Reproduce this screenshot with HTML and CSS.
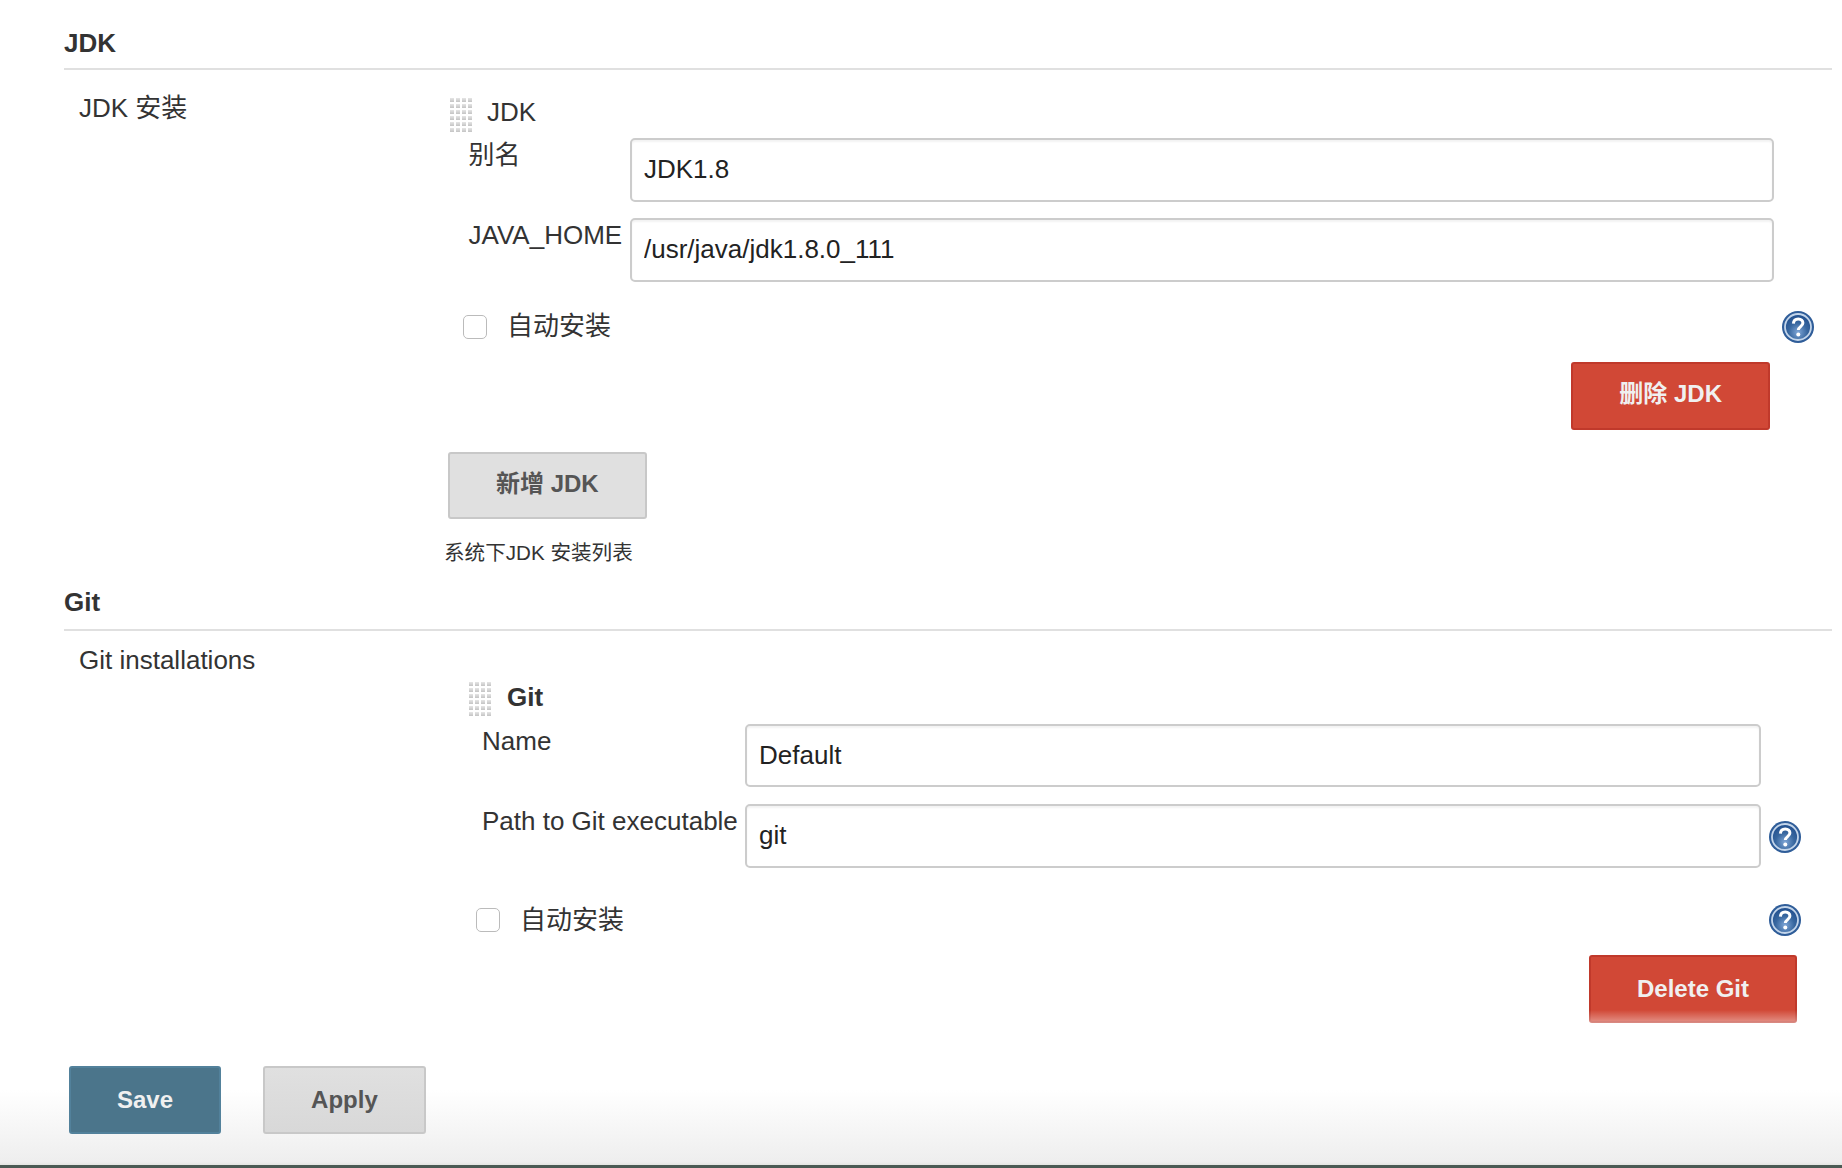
FILE: index.html
```html
<!DOCTYPE html>
<html lang="zh">
<head>
    <meta charset="utf-8">
    <title>Configure</title>
    <link rel="stylesheet" href="styles.css">
</head>
<body>
    <svg class="defs" width="0" height="0">
        <defs>
            <radialGradient id="helpFill" cx="50%" cy="70%" r="65%">
                <stop offset="0" stop-color="#7fa6d6"/>
                <stop offset="0.55" stop-color="#38679f"/>
                <stop offset="1" stop-color="#22508f"/>
            </radialGradient>
            <symbol id="help" viewBox="0 0 32 32">
                <circle cx="16" cy="16" r="16" fill="#2f5d99"/>
                <circle cx="16" cy="16" r="13" fill="url(#helpFill)" stroke="#c3d5ea" stroke-width="1.800"/>
                <path d="M11.400 12.600c.2-3 2.200-4.600 4.900-4.600 2.800 0 4.600 1.700 4.600 4 0 3.400-4.500 3.700-4.600 7" fill="none" stroke="#fff" stroke-width="3"/>
                <circle cx="16.300" cy="23.400" r="2" fill="#fff"/>
            </symbol>
        </defs>
    </svg>

    <div class="page">
        <h2 class="section-title">JDK</h2>
        <div class="section-body">
            <div class="section-label">JDK 安装</div>
            <div class="section-content">
                <div class="item-head">
                    <span class="handle"></span>
                    <span class="item-name">JDK</span>
                </div>
                <div class="field-row">
                    <label class="field-label" for="jdkName">别名</label>
                    <input class="text-input" type="text" id="jdkName" value="JDK1.8">
                </div>
                <div class="field-row field-row-next">
                    <label class="field-label" for="javaHome">JAVA_HOME</label>
                    <input class="text-input" type="text" id="javaHome" value="/usr/java/jdk1.8.0_111">
                </div>
                <div class="check-row">
                    <input class="check" type="checkbox" id="jdkAuto">
                    <label class="check-label" for="jdkAuto">自动安装</label>
                    <svg class="help-icon"><use href="#help"/></svg>
                </div>
                <div class="delete-row">
                    <button class="btn btn-danger btn-cjk" type="button">删除 JDK</button>
                </div>
                <button class="btn btn-plain btn-add btn-cjk" type="button">新增 JDK</button>
                <div class="section-note">系统下JDK 安装列表</div>
            </div>
        </div>

        <h2 class="section-title section-title-git">Git</h2>
        <div class="section-body">
            <div class="section-label section-label-git">Git installations</div>
            <div class="section-content section-content-git">
                <div class="item-head item-head-git">
                    <span class="handle"></span>
                    <b class="item-name">Git</b>
                </div>
                <div class="field-row field-row-git">
                    <label class="field-label" for="gitName">Name</label>
                    <input class="text-input" type="text" id="gitName" value="Default">
                    <span class="help-slot"></span>
                </div>
                <div class="field-row field-row-git field-row-next">
                    <label class="field-label" for="gitPath">Path to Git executable</label>
                    <input class="text-input" type="text" id="gitPath" value="git">
                    <svg class="help-icon help-icon-field"><use href="#help"/></svg>
                </div>
                <div class="check-row check-row-git">
                    <input class="check" type="checkbox" id="gitAuto">
                    <label for="gitAuto">自动安装</label>
                    <svg class="help-icon"><use href="#help"/></svg>
                </div>
                <div class="delete-row delete-row-git">
                    <button class="btn btn-danger" type="button">Delete Git</button>
                </div>
            </div>
        </div>
    </div>

    <div class="bottom-bar">
        <button class="btn btn-save" type="button">Save</button>
        <button class="btn btn-plain btn-apply" type="button">Apply</button>
    </div>
</body>
</html>
```

FILE: styles.css
```css
body {
    position: relative;
    height: 1168px;
    margin: 0;
    overflow: hidden;
    background-color: #fff;
    color: #333;
    font-family: "Liberation Sans", "Noto Sans CJK SC", sans-serif;
    font-size: 26px;
    line-height: 30px;
}
.defs {
    position: absolute;
}
.page {
    padding: 4px 10px 0 64px;
}
.section-title {
    margin: 0;
    padding: 24px 0 10px;
    border-bottom: 2px solid #e0e0e0;
    font-size: 26px;
    line-height: 30px;
}
.section-title-git {
    padding: 22px 0 12px;
}
.section-body {
    display: flex;
}
.section-label {
    flex: none;
    width: 369px;
    padding: 23px 0 0 15px;
}
.section-label-git {
    padding-top: 14px;
}
.section-content {
    flex: 1;
    padding-top: 28px;
}
.section-content-git {
    padding-top: 51px;
}

.item-head {
    display: flex;
    align-items: flex-start;
    gap: 15px;
    height: 34px;
    padding-left: 2px;
}
.item-head .item-name {
    margin-top: -1px;
}
.item-head-git {
    gap: 16px;
    padding-left: 21px;
}
.item-head-git .item-name {
    margin-top: 0;
}
.handle {
    flex: none;
    width: 22px;
    height: 34px;
    background-image:
        repeating-linear-gradient(90deg, transparent 0 4px, #fff 4px 6px),
        repeating-linear-gradient(180deg, transparent 0 4px, #fff 4px 6px),
        linear-gradient(#e6e6e6, #b2b2b2);
    background-size: auto, auto, 100% 6px;
}

.field-row {
    display: flex;
    align-items: flex-start;
    margin-top: 6px;
    padding: 0 58px 0 20.5px;
}
.field-row-next {
    margin-top: 16px;
}
.field-row-git {
    margin-top: 8px;
    padding: 0 31px 0 34px;
}
.field-row-git.field-row-next {
    margin-top: 17px;
}
.field-label {
    flex: none;
    width: 161.5px;
    padding-top: 2px;
}
.field-row-git .field-label {
    width: 263px;
}
.text-input {
    flex: 1;
    box-sizing: border-box;
    min-width: 0;
    height: 63.5px;
    padding: 0 12px;
    border: 2px solid #ccc;
    border-radius: 5px;
    box-shadow: inset 0 2px 2px rgba(0,0,0,0.05);
    background-color: #fff;
    color: #222;
    font-family: inherit;
    font-size: 26px;
}
.field-row-next .text-input {
    height: 64.5px;
}
.field-row-git.field-row-next .text-input {
    height: 63.5px;
}
.help-slot {
    flex: none;
    width: 32px;
    margin-left: 8px;
}
.help-icon {
    flex: none;
    width: 32px;
    height: 32px;
    margin-left: auto;
}
.help-icon-field {
    margin-top: 17px;
    margin-left: 8px;
}

.check-row {
    display: flex;
    align-items: center;
    gap: 20px;
    height: 32px;
    margin-top: 28.5px;
    padding: 0 18px 0 15px;
}
.check-label {
    margin-top: -2px;
}
.check-row-git {
    margin-top: 36px;
    padding: 0 31px 0 28px;
}
.check {
    flex: none;
    box-sizing: border-box;
    width: 24px;
    height: 24px;
    margin: 0;
    border: 1.5px solid #bbb;
    border-radius: 5px;
    background-color: #fff;
    appearance: none;
}

.btn {
    box-sizing: border-box;
    height: 68px;
    padding: 0 46px;
    border: 2px solid;
    border-radius: 3px;
    font-family: inherit;
    font-size: 24px;
    font-weight: bold;
    line-height: 30px;
}
.btn-cjk {
    padding-bottom: 4px;
}
.btn-danger {
    border-color: #c0392b;
    background-color: #d14836;
    color: #f0f0f0;
}
.btn-plain {
    border-color: #c8c8c8;
    background-color: #e0e0e0;
    color: #555;
}
.btn-save {
    border-color: #52819b;
    background-color: #4b758b;
    color: #f0f0f0;
}
.btn-apply {
    background-image: linear-gradient(#e0e0e0, #d8d8d8);
}
.delete-row {
    display: flex;
    justify-content: flex-end;
    margin-top: 19px;
    padding-right: 62px;
}
.delete-row-git {
    margin-top: 19px;
    padding-right: 35px;
}
.btn-add {
    display: block;
    height: 67.5px;
    margin-top: 22px;
    padding-bottom: 2.5px;
}
.section-note {
    margin: 21.5px 0 0 -4px;
    font-size: 20.6px;
    line-height: 24px;
}

/* sticks over the page, so the last row fades out under it */
.bottom-bar {
    position: absolute;
    left: 0;
    right: 0;
    bottom: 0;
    display: flex;
    gap: 42px;
    box-sizing: border-box;
    height: 144px;
    padding: 42px 0 0 69px;
    border-bottom: 3px solid #4b5a54;
    background-image: linear-gradient(#fff 0, #fff 66px, #eee 138px, #e4e5e2 141px);
}
.bottom-bar::before {
    content: "";
    position: absolute;
    left: 0;
    right: 0;
    top: -14px;
    height: 14px;
    background-image: linear-gradient(rgba(255,255,255,0), rgba(255,255,255,0.45));
}
```
